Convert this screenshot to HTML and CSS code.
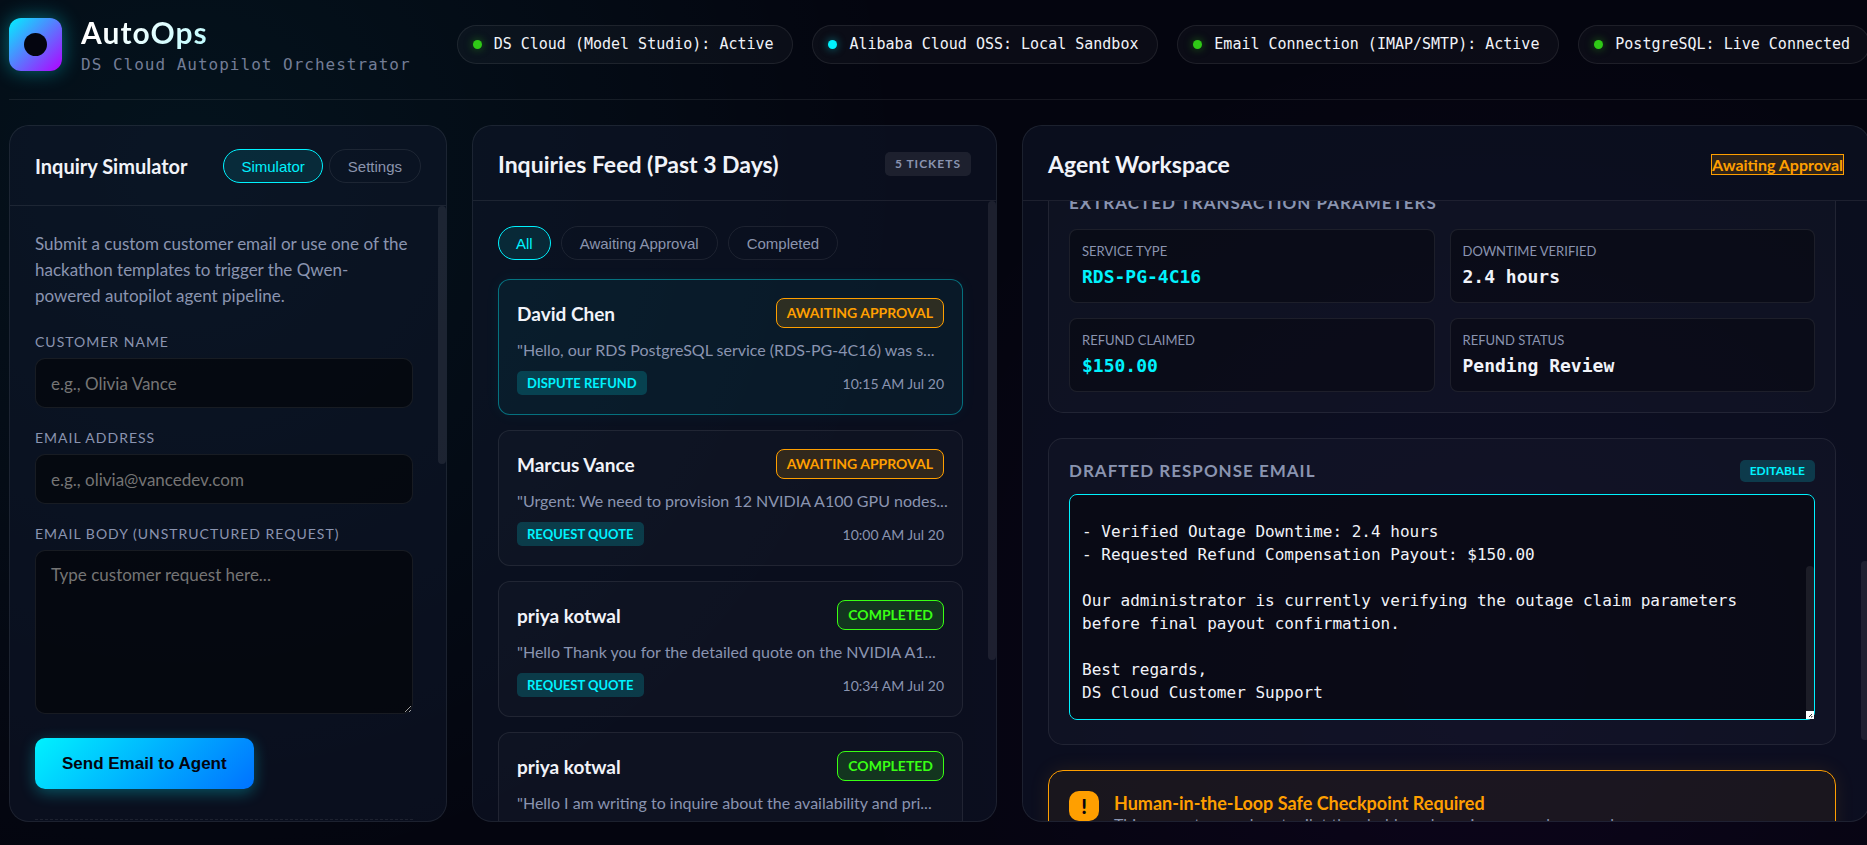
FILE: index.html
```html
<!DOCTYPE html>
<html lang="en">
<head>
    <meta charset="UTF-8">
    <meta name="viewport" content="width=device-width, initial-scale=1.0">
    <title>AutoOps - DS Cloud Autopilot Orchestrator</title>
    <link rel="stylesheet" href="styles.css">
</head>
<body>
    <div class="app">
        <header class="header">
            <div class="brand">
                <div class="logo"><span class="logo-core"></span></div>
                <div class="brand-text">
                    <h1>AutoOps</h1>
                    <p class="subtitle">DS Cloud Autopilot Orchestrator</p>
                </div>
            </div>
            <div class="status-bar">
                <div class="status-pill"><span class="dot"></span>DS Cloud (Model Studio): Active</div>
                <div class="status-pill"><span class="dot dot-cyan"></span>Alibaba Cloud OSS: Local Sandbox</div>
                <div class="status-pill"><span class="dot"></span>Email Connection (IMAP/SMTP): Active</div>
                <div class="status-pill"><span class="dot"></span>PostgreSQL: Live Connected</div>
            </div>
        </header>

        <main class="dashboard">
            <!-- Simulator -->
            <section class="panel">
                <div class="panel-header with-tabs">
                    <h2>Inquiry Simulator</h2>
                    <div class="tabs">
                        <button class="chip active">Simulator</button>
                        <button class="chip">Settings</button>
                    </div>
                </div>
                <div class="panel-view">
                    <div class="panel-body">
                        <p class="intro">Submit a custom customer email or use one of the hackathon templates to trigger the Qwen-<br>powered autopilot agent pipeline.</p>
                        <form>
                            <div class="form-group">
                                <label for="customerName">Customer Name</label>
                                <input type="text" id="customerName" placeholder="e.g., Olivia Vance">
                            </div>
                            <div class="form-group">
                                <label for="customerEmail">Email Address</label>
                                <input type="email" id="customerEmail" placeholder="e.g., olivia@vancedev.com">
                            </div>
                            <div class="form-group">
                                <label for="emailBody">Email Body (Unstructured Request)</label>
                                <textarea id="emailBody" placeholder="Type customer request here..."></textarea>
                            </div>
                            <button type="button" class="send-button">Send Email to Agent</button>
                        </form>
                        <div class="templates"></div>
                    </div>
                    <span class="scroll-thumb" style="top: 0; height: 42%;"></span>
                </div>
            </section>

            <!-- Feed -->
            <section class="panel">
                <div class="panel-header">
                    <h2>Inquiries Feed (Past 3 Days)</h2>
                    <span class="count">5 Tickets</span>
                </div>
                <div class="panel-view">
                    <div class="panel-body">
                        <div class="filters">
                            <button class="chip active">All</button>
                            <button class="chip">Awaiting Approval</button>
                            <button class="chip">Completed</button>
                        </div>
                        <div class="feed">
                            <article class="ticket selected">
                                <div class="ticket-row">
                                    <h3>David Chen</h3>
                                    <span class="badge awaiting">Awaiting Approval</span>
                                </div>
                                <p class="preview">"Hello, our RDS PostgreSQL service (RDS-PG-4C16) was s...</p>
                                <div class="ticket-row">
                                    <span class="tag">Dispute Refund</span>
                                    <span class="time">10:15 AM Jul 20</span>
                                </div>
                            </article>
                            <article class="ticket">
                                <div class="ticket-row">
                                    <h3>Marcus Vance</h3>
                                    <span class="badge awaiting">Awaiting Approval</span>
                                </div>
                                <p class="preview">"Urgent: We need to provision 12 NVIDIA A100 GPU nodes...</p>
                                <div class="ticket-row">
                                    <span class="tag">Request Quote</span>
                                    <span class="time">10:00 AM Jul 20</span>
                                </div>
                            </article>
                            <article class="ticket">
                                <div class="ticket-row">
                                    <h3>priya kotwal</h3>
                                    <span class="badge completed">Completed</span>
                                </div>
                                <p class="preview">"Hello Thank you for the detailed quote on the NVIDIA A1...</p>
                                <div class="ticket-row">
                                    <span class="tag">Request Quote</span>
                                    <span class="time">10:34 AM Jul 20</span>
                                </div>
                            </article>
                            <article class="ticket">
                                <div class="ticket-row">
                                    <h3>priya kotwal</h3>
                                    <span class="badge completed">Completed</span>
                                </div>
                                <p class="preview">"Hello I am writing to inquire about the availability and pri...</p>
                            </article>
                        </div>
                    </div>
                    <span class="scroll-thumb" style="top: 0; height: 74%;"></span>
                </div>
            </section>

            <!-- Workspace -->
            <section class="panel">
                <div class="panel-header">
                    <h2>Agent Workspace</h2>
                    <span class="workspace-status awaiting">Awaiting Approval</span>
                </div>
                <div class="panel-view">
                    <div class="panel-body" id="workspace">
                        <div class="pipeline"></div>

                        <div class="card" id="paramsCard">
                            <h3 class="card-title">Extracted Transaction Parameters</h3>
                            <div class="params">
                                <div class="param">
                                    <span class="param-label">Service Type</span>
                                    <span class="param-value cyan">RDS-PG-4C16</span>
                                </div>
                                <div class="param">
                                    <span class="param-label">Downtime Verified</span>
                                    <span class="param-value">2.4 hours</span>
                                </div>
                                <div class="param">
                                    <span class="param-label">Refund Claimed</span>
                                    <span class="param-value cyan">$150.00</span>
                                </div>
                                <div class="param">
                                    <span class="param-label">Refund Status</span>
                                    <span class="param-value">Pending Review</span>
                                </div>
                            </div>
                        </div>

                        <div class="card">
                            <div class="card-header">
                                <label class="card-title" for="draft">Drafted Response Email</label>
                                <span class="editable">Editable</span>
                            </div>
                            <div class="draft-box">
                                <textarea id="draft" class="draft">
Dear David Chen,

Thank you for contacting DS Cloud Support. We have logged your
claim for RDS-PG-4C16 as follows:

- Verified Outage Downtime: 2.4 hours
- Requested Refund Compensation Payout: $150.00

Our administrator is currently verifying the outage claim parameters
before final payout confirmation.

Best regards,
DS Cloud Customer Support</textarea>
                                <span class="scroll-thumb" style="top: 32%; height: 65%;"></span>
                                <svg class="resizer" viewBox="0 0 8 8"><rect width="8" height="8" fill="#fff"/><path d="M3 6L6 3M5 6h1V5" stroke="#333" fill="none"/></svg>
                            </div>
                        </div>

                        <div class="checkpoint">
                            <div class="checkpoint-icon">!</div>
                            <div>
                                <h3>Human-in-the-Loop Safe Checkpoint Required</h3>
                                <p>This request exceeds autopilot thresholds and requires manual approval.</p>
                            </div>
                        </div>
                    </div>
                    <span class="scroll-thumb" style="top: 58%; height: 29%;"></span>
                </div>
            </section>
        </main>
    </div>

    <script src="script.js"></script>
</body>
</html>
```

FILE: styles.css
```css
* {
    box-sizing: border-box;
    margin: 0;
    padding: 0;
}
body {
    background-color: #04050f;
    background-image:
        radial-gradient(circle at 10% 20%, rgba(0, 242, 254, 0.06) 0%, transparent 40%),
        radial-gradient(circle at 80% 80%, rgba(179, 0, 255, 0.05) 0%, transparent 40%);
    color: #f1f3f9;
    font-family: Lato, "Open Sans", sans-serif;
    font-size: 17px;
    height: 100vh;
    overflow: hidden;
}
.app {
    display: flex;
    flex-direction: column;
    height: 100vh;
    margin-right: -3px;
    padding: 0 0 23px 9px;
}

/* header */
.header {
    display: flex;
    align-items: center;
    gap: 46px;
    height: 100px;
    padding-bottom: 11px;
    border-bottom: 1px solid rgba(255, 255, 255, 0.08);
}
.brand {
    display: flex;
    align-items: center;
    gap: 19px;
}
.brand-text {
    padding-top: 4px;
}
.logo {
    display: flex;
    align-items: center;
    justify-content: center;
    width: 53px;
    height: 53px;
    border-radius: 12px;
    background: linear-gradient(135deg, #00f2fe, #b300ff);
    box-shadow: 0 0 20px rgba(0, 242, 254, 0.4);
}
.logo-core {
    width: 23px;
    height: 23px;
    border-radius: 50%;
    background: #04050f;
}
h1 {
    margin-bottom: 4px;
    font-size: 30px;
    line-height: 34px;
    letter-spacing: 1px;
    background: linear-gradient(135deg, #fff 10%, #00f2fe 140%);
    background-clip: text;
    -webkit-background-clip: text;
    color: transparent;
}
.subtitle {
    font-family: "DejaVu Sans Mono", "Liberation Mono", monospace;
    font-size: 16px;
    line-height: 24px;
    letter-spacing: 1px;
    color: #737d96;
    white-space: nowrap;
}
.status-bar {
    display: flex;
    flex: 1;
    gap: 19px;
}
.status-pill {
    display: flex;
    flex: 1 0 auto;
    align-items: center;
    gap: 12px;
    height: 39px;
    padding: 0 15px;
    border: 1px solid rgba(255, 255, 255, 0.08);
    border-radius: 20px;
    background: rgba(255, 255, 255, 0.03);
    font-family: "DejaVu Sans Mono", "Liberation Mono", monospace;
    font-size: 15px;
    white-space: nowrap;
}
.dot {
    width: 9px;
    height: 9px;
    border-radius: 50%;
    background: #2fc916;
    box-shadow: 0 0 8px rgba(47, 201, 22, 0.5);
}
.dot-cyan {
    background: #00f2fe;
    box-shadow: 0 0 8px rgba(0, 242, 254, 0.5);
}

/* panels */
.dashboard {
    display: grid;
    grid-template-columns: 438fr 525fr 848fr;
    gap: 25px;
    flex: 1;
    min-height: 0;
    padding-top: 25px;
}
.panel {
    display: flex;
    flex-direction: column;
    min-width: 0;
    min-height: 0;
    border: 1px solid rgba(255, 255, 255, 0.08);
    border-radius: 20px;
    background: rgba(16, 24, 43, 0.5);
    overflow: hidden;
}
.panel-header {
    display: flex;
    align-items: center;
    justify-content: space-between;
    flex-shrink: 0;
    padding: 21px 25px 19px;
    border-bottom: 1px solid rgba(255, 255, 255, 0.08);
}
h2 {
    font-size: 23px;
    line-height: 34px;
}
.with-tabs {
    padding: 23px 25px 22px;
}
.with-tabs h2 {
    font-size: 20px;
}
.panel-view {
    position: relative;
    flex: 1;
    min-height: 0;
}
.panel-body {
    height: 100%;
    padding: 25px 33px 25px 25px;
    overflow-y: auto;
    scrollbar-width: none;
}
.scroll-thumb {
    position: absolute;
    right: 0;
    width: 8px;
    border-radius: 4px;
    background: rgba(255, 255, 255, 0.08);
}
.tabs {
    display: flex;
    gap: 6px;
}
.chip {
    height: 34px;
    padding: 0 18px;
    border: 1px solid rgba(255, 255, 255, 0.08);
    border-radius: 20px;
    background: transparent;
    color: #8a94ad;
    font-family: "Liberation Sans", Arial, sans-serif;
    font-size: 15px;
    cursor: pointer;
}
.chip.active {
    padding: 0 17px;
    border-color: #00f2fe;
    background: rgba(0, 242, 254, 0.1);
    color: #00f2fe;
}

/* simulator form */
.intro {
    margin-bottom: 23px;
    line-height: 26px;
    color: #8a94b0;
}
.form-group {
    display: flex;
    flex-direction: column;
    gap: 7px;
    margin-bottom: 20px;
}
.form-group label {
    font-size: 14px;
    line-height: 19px;
    letter-spacing: 1px;
    text-transform: uppercase;
    color: #8a94b0;
}
.form-group input,
.form-group textarea {
    width: 100%;
    height: 50px;
    padding: 0 15px;
    border: 1px solid rgba(255, 255, 255, 0.08);
    border-radius: 10px;
    background: rgba(0, 0, 0, 0.5);
    color: #f1f3f9;
    font-family: inherit;
    font-size: 17px;
}
.form-group textarea {
    height: 164px;
    padding: 13px 15px;
    resize: vertical;
}
.form-group input::placeholder,
.form-group textarea::placeholder {
    color: #757575;
}
.send-button {
    height: 51px;
    margin-top: 4px;
    padding: 0 27px;
    border: none;
    border-radius: 10px;
    background: linear-gradient(135deg, #00f2fe, #0072ff);
    box-shadow: 0 4px 15px rgba(0, 242, 254, 0.3);
    color: #04050f;
    font-family: "Liberation Sans", Arial, sans-serif;
    font-size: 17px;
    font-weight: bold;
    cursor: pointer;
}
.templates {
    margin-top: 30px;
    border-top: 1px dashed rgba(255, 255, 255, 0.08);
}

/* feed */
.count {
    padding: 0 10px;
    border-radius: 5px;
    background: rgba(255, 255, 255, 0.08);
    color: #8a94b0;
    font-size: 12px;
    font-weight: bold;
    line-height: 24px;
    letter-spacing: 1px;
    text-transform: uppercase;
}
.filters {
    display: flex;
    gap: 10px;
    margin-bottom: 19px;
}
.feed {
    display: flex;
    flex-direction: column;
    gap: 15px;
}
.ticket {
    padding: 18px 18px 19px;
    border: 1px solid rgba(255, 255, 255, 0.08);
    border-radius: 12px;
    background: rgba(255, 255, 255, 0.02);
}
.ticket.selected {
    border-color: rgba(0, 242, 254, 0.4);
    background: rgba(0, 242, 254, 0.05);
    box-shadow: 0 0 15px rgba(0, 242, 254, 0.05);
}
.ticket-row {
    display: flex;
    align-items: center;
    justify-content: space-between;
}
.ticket h3 {
    font-size: 19px;
}
.badge {
    padding: 0 10px;
    border: 1px solid;
    border-radius: 8px;
    font-size: 14px;
    font-weight: bold;
    line-height: 28px;
    text-transform: uppercase;
}
.awaiting {
    border-color: #ff9f00;
    background: rgba(255, 159, 0, 0.15);
    color: #ff9f00;
}
.completed {
    border-color: #39ff14;
    background: rgba(57, 255, 20, 0.15);
    color: #39ff14;
}
.preview {
    margin: 9px 0 8px;
    font-size: 16px;
    line-height: 26px;
    color: #8a94b0;
    white-space: nowrap;
}
.tag,
.editable {
    padding: 0 10px;
    border-radius: 5px;
    background: rgba(0, 242, 254, 0.18);
    color: #00f2fe;
    font-size: 13px;
    font-weight: bold;
    line-height: 24px;
    text-transform: uppercase;
}
.time {
    font-size: 14px;
    color: #8a94b0;
}

/* workspace */
.workspace-status {
    border: 1px solid;
    font-size: 16px;
    font-weight: bold;
    line-height: 19px;
}
.pipeline {
    height: 1210px;
}
.card {
    margin-bottom: 25px;
    padding: 20px;
    border: 1px solid rgba(255, 255, 255, 0.08);
    border-radius: 15px;
    background: rgba(255, 255, 255, 0.02);
}
.card-title {
    font-size: 17px;
    font-weight: bold;
    line-height: 24px;
    letter-spacing: 1px;
    text-transform: uppercase;
    color: #8a94b0;
}
.params {
    display: grid;
    grid-template-columns: 1fr 1fr;
    gap: 15px;
    margin-top: 14px;
}
.param {
    display: flex;
    flex-direction: column;
    gap: 5px;
    height: 74px;
    padding: 12px;
    border: 1px solid rgba(255, 255, 255, 0.08);
    border-radius: 8px;
    background: rgba(0, 0, 0, 0.3);
}
.param-label {
    font-size: 13px;
    line-height: 18px;
    text-transform: uppercase;
    color: #8a94b0;
}
.param-value {
    font-family: "DejaVu Sans Mono", "Liberation Mono", monospace;
    font-size: 18px;
    font-weight: bold;
    line-height: 24px;
}
.cyan {
    color: #00f2fe;
}
.card-header {
    display: flex;
    align-items: center;
    justify-content: space-between;
    margin-bottom: 11px;
}
.editable {
    font-size: 12px;
    line-height: 22px;
}
.draft-box {
    position: relative;
    margin-bottom: 4px;
}
.draft {
    display: block;
    width: 100%;
    height: 226px;
    padding: 12px 12px 15px;
    border: 1px solid #00f2fe;
    border-radius: 8px;
    outline: none;
    background: rgba(0, 0, 0, 0.4);
    color: #f1f3f9;
    font-family: "DejaVu Sans Mono", "Liberation Mono", monospace;
    font-size: 16px;
    line-height: 23px;
    resize: none;
    scrollbar-width: none;
}
.draft-box .scroll-thumb {
    right: 1px;
}
.resizer {
    position: absolute;
    right: 1px;
    bottom: 1px;
    width: 8px;
    height: 8px;
}
.checkpoint {
    display: flex;
    gap: 15px;
    min-height: 290px;
    padding: 20px;
    border: 1px solid #ff9f00;
    border-radius: 15px;
    background: rgba(255, 159, 0, 0.06);
    box-shadow: 0 0 20px rgba(255, 159, 0, 0.1);
}
.checkpoint-icon {
    width: 30px;
    height: 30px;
    border-radius: 10px;
    background: #ff9f00;
    color: #04050f;
    font-size: 20px;
    font-weight: 900;
    line-height: 30px;
    text-align: center;
}
.checkpoint h3 {
    font-size: 18px;
    line-height: 24px;
    color: #ff9f00;
}
.checkpoint p {
    font-size: 16px;
    line-height: 18px;
    color: #8a94b0;
}
```

FILE: script.js
```js
// open the workspace at the extracted parameters, with the end of the draft in view
const workspace = document.getElementById('workspace');
const paramsCard = document.getElementById('paramsCard');
const draft = document.getElementById('draft');

workspace.scrollTop = paramsCard.offsetTop + 31;
draft.scrollTop = draft.scrollHeight;
```
